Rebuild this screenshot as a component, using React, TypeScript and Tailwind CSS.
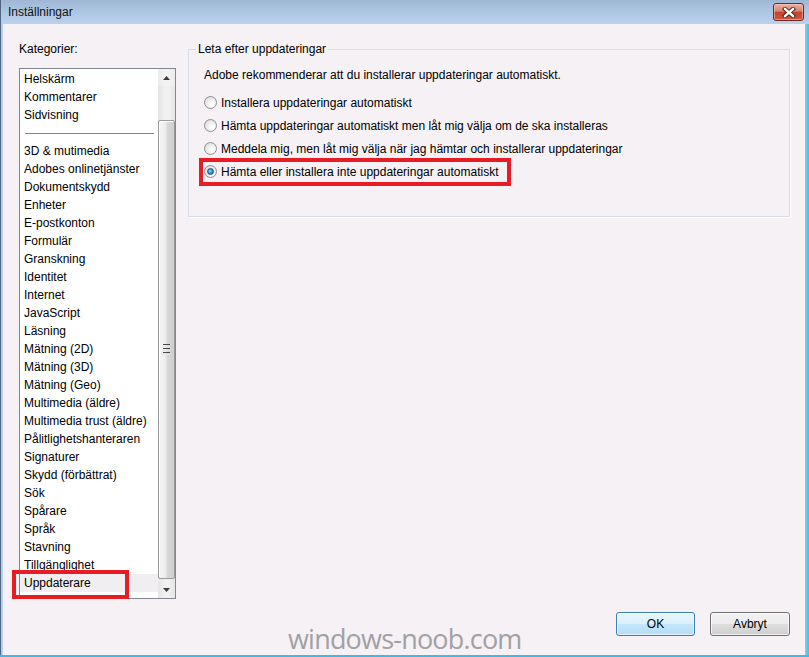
import React from "react";

const topItems = ["Helskärm", "Kommentarer", "Sidvisning"];
const items = [
  "3D & mutimedia",
  "Adobes onlinetjänster",
  "Dokumentskydd",
  "Enheter",
  "E-postkonton",
  "Formulär",
  "Granskning",
  "Identitet",
  "Internet",
  "JavaScript",
  "Läsning",
  "Mätning (2D)",
  "Mätning (3D)",
  "Mätning (Geo)",
  "Multimedia (äldre)",
  "Multimedia trust (äldre)",
  "Pålitlighetshanteraren",
  "Signaturer",
  "Skydd (förbättrat)",
  "Sök",
  "Spårare",
  "Språk",
  "Stavning",
  "Tillgänglighet",
  "Uppdaterare",
];

const radios = [
  "Installera uppdateringar automatiskt",
  "Hämta uppdateringar automatiskt men låt mig välja om de ska installeras",
  "Meddela mig, men låt mig välja när jag hämtar och installerar uppdateringar",
  "Hämta eller installera inte uppdateringar automatiskt",
];

function CloseButton() {
  return (
    <div className="w-[31px] h-[18px] rounded-[3px] border border-[#6b2a24] bg-[linear-gradient(to_bottom,#eab3a6_0%,#d8826f_45%,#c2432f_52%,#cf5a3f_100%)] flex items-center justify-center shadow-[inset_0_0_0_1px_rgba(255,210,200,0.5)]">
      <svg width="14" height="11" viewBox="0 0 14 11">
        <path d="M3 2 L11 9 M11 2 L3 9" stroke="#3b1a16" strokeWidth="4.2" strokeLinecap="square" />
        <path d="M3 2 L11 9 M11 2 L3 9" stroke="#ffffff" strokeWidth="2.4" strokeLinecap="square" />
      </svg>
    </div>
  );
}

function Radio({ checked }: { checked?: boolean }) {
  return (
    <div className="w-[13px] h-[13px] rounded-full border border-[#8e8f8f] bg-[radial-gradient(circle_at_65%_65%,#ffffff_0%,#f2f2f2_40%,#d2d2d2_100%)] flex items-center justify-center shrink-0">
      {checked && (
        <div className="w-[7px] h-[7px] rounded-full border border-[#1b4f86] bg-[radial-gradient(circle_at_40%_40%,#8fd3ff_0%,#2b8ee0_55%,#0f5fa8_100%)]" />
      )}
    </div>
  );
}

function Scrollbar() {
  return (
    <div className="w-[17px] flex flex-col bg-[linear-gradient(to_right,#e4e4e4_0%,#f1f1f1_40%,#f1f1f1_60%,#e4e4e4_100%)]">
      <div className="h-[17px] flex items-center justify-center bg-[linear-gradient(to_right,#ececec,#f4f4f4,#ececec)]">
        <svg width="7" height="4" viewBox="0 0 7 4">
          <path d="M0 4 L3.5 0 L7 4 Z" fill="#3c3c3c" />
        </svg>
      </div>
      <div className="h-[34px]" />
      <div className="flex-1 rounded-[2px] border border-[#999999] bg-[linear-gradient(to_right,#f6f6f6_0%,#ececec_45%,#d8d8d8_55%,#cfcfcf_100%)] flex items-center justify-center shadow-[inset_1px_1px_0_#ffffff]">
        <div className="flex flex-col gap-[1px]">
          <div className="w-[7px] h-[1px] bg-[#4a4a4a]" />
          <div className="w-[7px] h-[1px] bg-[#e8e8e8]" />
          <div className="w-[7px] h-[1px] bg-[#4a4a4a]" />
          <div className="w-[7px] h-[1px] bg-[#e8e8e8]" />
          <div className="w-[7px] h-[1px] bg-[#4a4a4a]" />
          <div className="w-[7px] h-[1px] bg-[#e8e8e8]" />
        </div>
      </div>
      <div className="h-[2px]" />
      <div className="h-[17px] flex items-center justify-center">
        <svg width="7" height="4" viewBox="0 0 7 4">
          <path d="M0 0 L7 0 L3.5 4 Z" fill="#3c3c3c" />
        </svg>
      </div>
    </div>
  );
}

export default function App() {
  return (
    <div className="relative w-[809px] h-[657px] overflow-hidden flex flex-col bg-[#b9d1ea] font-['Liberation_Sans',Arial,sans-serif] text-[12px] leading-[16px] text-black">
      {/* Title bar */}
      <div className="h-[24px] shrink-0 flex items-center justify-between pl-[7px] pr-[5px] bg-[linear-gradient(to_bottom,#9fb7d4_0%,#adc6e2_50%,#bad2ec_100%)] border-l border-[#4f6580]">
        <span className="text-[12px] text-[#111]">Inställningar</span>
        <CloseButton />
      </div>

      {/* Body */}
      <div className="flex-1 flex min-h-0">
        <div className="w-[3px] border-l border-[#4f6580] bg-[#b6cee8]" />
        <div className="flex-1 flex flex-col bg-[#f5f1f5] pt-[17px] pl-[16px] pr-[15px]">
          <div className="flex gap-[12px]">
            {/* Left column */}
            <div className="w-[157px] shrink-0">
              <div className="h-[16px]">Kategorier:</div>
              <div className="mt-[11px] h-[531px] border border-[#828790] bg-white flex">
                <div className="flex-1 pt-[1px] flex flex-col">
                  {topItems.map((t) => (
                    <div key={t} className="h-[18px] leading-[18px] pl-[4px] whitespace-nowrap">
                      {t}
                    </div>
                  ))}
                  <div className="h-[18px] shrink-0 pt-[9px] pl-[5px]">
                    <div className="h-[1px] w-[129px] bg-[#3d95e6]" />
                  </div>
                  {items.map((t) => (
                    <div
                      key={t}
                      className={
                        t === "Uppdaterare"
                          ? "h-[18px] shrink-0 leading-[18px] pl-[4px] whitespace-nowrap bg-[#f0eef0]"
                          : "h-[18px] shrink-0 leading-[18px] pl-[4px] whitespace-nowrap"
                      }
                    >
                      {t}
                    </div>
                  ))}
                </div>
                <Scrollbar />
              </div>
            </div>

            {/* Right column */}
            <fieldset className="w-[602px] h-[176px] border border-[#d5dfe5] shadow-[1px_1px_0_#ffffff] pl-[15px] pb-[33px] m-0 min-w-0">
              <legend className="-ml-[8px] px-[2px] h-[16px]">Leta efter uppdateringar</legend>
              <div className="mt-[10px] h-[16px]">
                Adobe rekommenderar att du installerar uppdateringar automatiskt.
              </div>
              <div className="mt-[8px] flex flex-col">
                {radios.map((r, i) => (
                  <div key={r} className="h-[23px] flex items-center gap-[4px]">
                    <Radio checked={i === 3} />
                    <span className="whitespace-nowrap">{r}</span>
                  </div>
                ))}
              </div>
            </fieldset>
          </div>

          {/* Buttons */}
          <div className="mt-[13px] flex justify-end gap-[15px]">
            <button className="w-[79px] h-[24px] rounded-[3px] border border-[#3c7fb1] bg-[linear-gradient(to_bottom,#eaf6fd_0%,#d9f0fc_50%,#c4e6fa_52%,#b4ddf4_100%)] shadow-[inset_0_0_0_1px_rgba(255,255,255,0.6)] text-[12px] text-black">
              OK
            </button>
            <button className="w-[80px] h-[24px] rounded-[3px] border border-[#707070] bg-[linear-gradient(to_bottom,#f2f2f2_0%,#ebebeb_50%,#dddddd_52%,#cfcfcf_100%)] shadow-[inset_0_0_0_1px_rgba(255,255,255,0.7)] text-[12px] text-black">
              Avbryt
            </button>
          </div>
        </div>
        <div className="w-[4px] bg-[linear-gradient(to_right,#8fc6e6,#4bbde9)]" />
      </div>
      <div className="h-[2px] shrink-0 bg-[#3bbbe6]" />

      {/* Annotation overlays */}
      <div className="absolute left-[12px] top-[570px] w-[117px] h-[29px] border-[4px] border-[#e81c24]" />
      <div className="absolute left-[199px] top-[158px] w-[312px] h-[28px] border-[4px] border-[#e81c24]" />

      {/* Watermark */}
      <div className="absolute left-[288px] top-[624px] font-['Open_Sans',sans-serif] text-[27px] leading-[30px] tracking-[-0.8px] text-[#a2a0a4] whitespace-nowrap">
        windows-noob.com
      </div>
    </div>
  );
}
